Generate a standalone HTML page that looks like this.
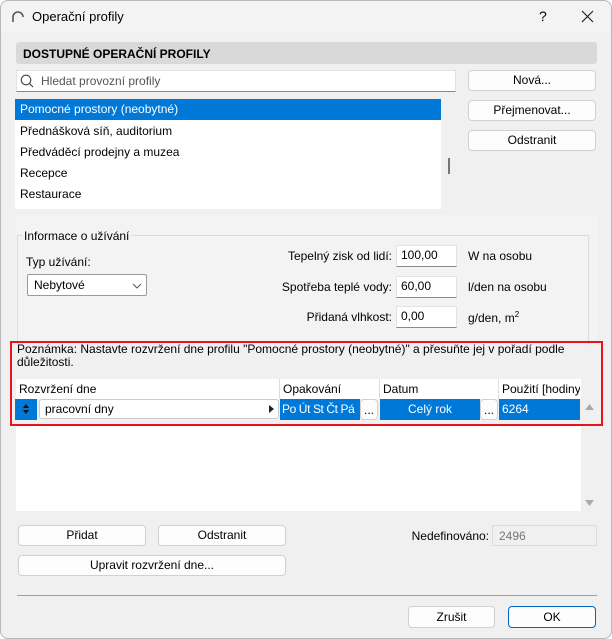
<!DOCTYPE html>
<html><head><meta charset="utf-8"><style>
*{box-sizing:border-box;margin:0;padding:0}
body{width:612px;height:639px;overflow:hidden;background:#fff;font-family:"Liberation Sans",sans-serif;font-size:12px;color:#000;position:relative}
.win{position:absolute;left:0;top:0;width:612px;height:639px;background:#f0f0f0;border:1px solid #b8b8b8;border-radius:8px}
.a{position:absolute;white-space:nowrap}
.btn{position:absolute;background:#fdfdfd;border:1px solid #d0d0d0;border-radius:4px;text-align:center;line-height:18px;white-space:nowrap}
.inp{position:absolute;background:#fff;border:1px solid #e3e3e3;border-bottom:1px solid #8a8a8a;padding-left:4px;line-height:19px;white-space:nowrap}
.blue{position:absolute;background:#0078d7;color:#fff;line-height:20px;white-space:nowrap;overflow:hidden}
</style></head><body><div class="win">
<div class="a" style="left:0;top:0;width:610px;height:32px;background:#f3f3f3;border-radius:8px 8px 0 0"></div>
<svg class="a" style="left:10px;top:9px" width="14" height="14"><path d="M2 12 V7 A5 5 0 0 1 12 7" fill="none" stroke="#555" stroke-width="1.6"/></svg>
<div class="a" style="left:31px;top:8px;font-size:13px">Operační profily</div>
<div class="a" style="left:538px;top:7px;font-size:14px">?</div>
<svg class="a" style="left:580px;top:9px" width="13" height="13"><path d="M1 1L12 12M12 1L1 12" stroke="#222" stroke-width="1.2"/></svg>

<div class="a" style="left:15px;top:41px;width:581px;height:22px;background:#d9d9d9;border-radius:3px;font-weight:bold;padding:5px 0 0 7px">DOSTUPNÉ OPERAČNÍ PROFILY</div>
<div class="inp" style="left:15px;top:69px;width:440px;height:22px;padding-left:24px;color:#555;line-height:20px">Hledat provozní profily</div>
<svg class="a" style="left:19px;top:73px" width="14" height="14"><circle cx="6" cy="6" r="4.8" fill="none" stroke="#444" stroke-width="1.1"/><path d="M9.5 9.5L13 13" stroke="#444" stroke-width="1.2"/></svg>
<div class="btn" style="left:467px;top:69px;width:128px;height:21px">Nová...</div>
<div class="btn" style="left:467px;top:99px;width:128px;height:21px">Přejmenovat...</div>
<div class="btn" style="left:467px;top:129px;width:128px;height:21px">Odstranit</div>

<div class="a" style="left:14px;top:98px;width:426px;height:110px;background:#fff"></div>
<div class="a" style="left:14px;top:98px;width:426px;height:21px;background:#0078d7;color:#fff;padding:3px 0 0 5px">Pomocné prostory (neobytné)</div>
<div class="a" style="left:19px;top:123px">Přednášková síň, auditorium</div>
<div class="a" style="left:19px;top:144px">Předváděcí prodejny a muzea</div>
<div class="a" style="left:19px;top:165px">Recepce</div>
<div class="a" style="left:19px;top:186px">Restaurace</div>
<div class="a" style="left:447px;top:157px;width:2px;height:16px;background:#777"></div>

<div class="a" style="left:15px;top:214px;width:581px;height:125px;background:#f3f3f3"></div>
<div class="a" style="left:16px;top:234px;width:572px;height:110px;border:1px solid #dcdcdc;border-bottom:none"></div>
<div class="a" style="left:21px;top:228px;background:#f3f3f3;padding:0 2px">Informace o užívání</div>
<div class="a" style="left:25px;top:254px">Typ užívání:</div>
<div class="a" style="left:26px;top:273px;width:120px;height:22px;background:#fff;border:1px solid #9a9a9a;border-radius:2px;padding:3px 0 0 6px">Nebytové</div>
<svg class="a" style="left:131px;top:282px" width="10" height="6"><path d="M1 1L5 5L9 1" fill="none" stroke="#555"/></svg>
<div class="a" style="right:219px;top:248px">Tepelný zisk od lidí:</div>
<div class="a" style="right:219px;top:279px">Spotřeba teplé vody:</div>
<div class="a" style="right:219px;top:309px">Přidaná vlhkost:</div>
<div class="inp" style="left:395px;top:244px;width:61px;height:22px">100,00</div>
<div class="inp" style="left:395px;top:275px;width:61px;height:22px">60,00</div>
<div class="inp" style="left:395px;top:305px;width:61px;height:22px">0,00</div>
<div class="a" style="left:467px;top:248px">W na osobu</div>
<div class="a" style="left:467px;top:279px">l/den na osobu</div>
<div class="a" style="left:467px;top:309px">g/den, m<sup style="font-size:8px">2</sup></div>

<div class="a" style="left:15px;top:424px;width:565px;height:86px;background:#fff"></div>
<div class="a" style="left:9px;top:340px;width:593px;height:85px;border:2px solid #e8141c"></div>
<div class="a" style="left:16px;top:342px;line-height:13px">Poznámka: Nastavte rozvržení dne profilu "Pomocné prostory (neobytné)" a přesuňte jej v pořadí podle<br>důležitosti.</div>
<div class="a" style="left:15px;top:378px;width:565px;height:20px;background:#fff"></div>
<div class="a" style="left:18px;top:381px">Rozvržení dne</div>
<div class="a" style="left:278px;top:378px;width:1px;height:20px;background:#ddd"></div>
<div class="a" style="left:282px;top:381px">Opakování</div>
<div class="a" style="left:378px;top:378px;width:1px;height:20px;background:#ddd"></div>
<div class="a" style="left:382px;top:381px">Datum</div>
<div class="a" style="left:497px;top:378px;width:1px;height:20px;background:#ddd"></div>
<div class="a" style="left:501px;top:381px;width:78px;overflow:hidden">Použití [hodiny]</div>
<div class="blue" style="left:14px;top:398px;width:22px;height:21px"></div>
<svg class="a" style="left:21px;top:402px" width="8" height="12"><path d="M1 5L4 1L7 5ZM1 7L4 11L7 7Z" fill="#111"/></svg>
<div class="a" style="left:38px;top:398px;width:240px;height:20px;background:#fff;border:1px solid #ccc;border-radius:3px;padding:2px 0 0 5px">pracovní dny</div>
<svg class="a" style="left:268px;top:404px" width="5" height="8"><path d="M0 0L5 4L0 8Z" fill="#222"/></svg>
<div class="blue" style="left:279px;top:398px;width:80px;height:21px;padding-left:2px;letter-spacing:-0.4px">Po Út St Čt Pá</div>
<div class="btn" style="left:359px;top:398px;width:18px;height:21px;line-height:20px">...</div>
<div class="blue" style="left:379px;top:398px;width:100px;height:21px;text-align:center">Celý rok</div>
<div class="btn" style="left:479px;top:398px;width:18px;height:21px;line-height:20px">...</div>
<div class="blue" style="left:498px;top:398px;width:81px;height:21px;padding-left:3px">6264</div>
<svg class="a" style="left:584px;top:402px" width="9" height="7"><path d="M0 7L4.5 1L9 7Z" fill="#aaa"/></svg>
<svg class="a" style="left:584px;top:499px" width="9" height="7"><path d="M0 0L4.5 6L9 0Z" fill="#aaa"/></svg>

<div class="btn" style="left:17px;top:524px;width:128px;height:21px">Přidat</div>
<div class="btn" style="left:157px;top:524px;width:128px;height:21px">Odstranit</div>
<div class="btn" style="left:17px;top:554px;width:268px;height:21px">Upravit rozvržení dne...</div>
<div class="a" style="right:122px;top:528px">Nedefinováno:</div>
<div class="a" style="left:491px;top:524px;width:105px;height:21px;border:1px solid #dcdcdc;color:#777;padding:3px 0 0 6px">2496</div>
<div class="a" style="left:16px;top:594px;width:580px;height:1px;background:#a0a0a0"></div>
<div class="btn" style="left:407px;top:605px;width:87px;height:22px;line-height:20px">Zrušit</div>
<div class="btn" style="left:507px;top:605px;width:88px;height:22px;line-height:20px;border:1px solid #0067c0">OK</div>
</div></body></html>
